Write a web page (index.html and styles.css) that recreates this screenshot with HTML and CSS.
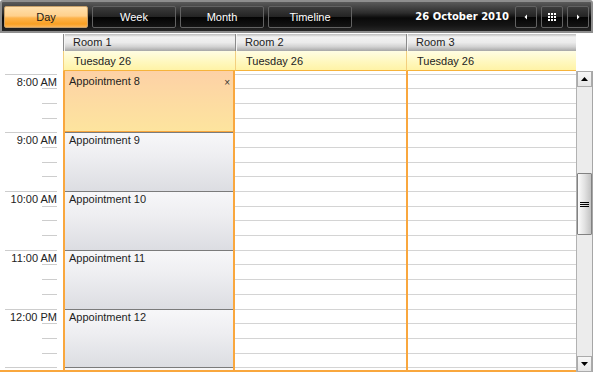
FILE: index.html
```html
<!DOCTYPE html>
<html>
<head>
<meta charset="utf-8">
<link rel="stylesheet" href="styles.css">
</head>
<body>
<div class="toolbar">
  <div class="btn active">Day</div>
  <div class="btn">Week</div>
  <div class="btn">Month</div>
  <div class="btn">Timeline</div>
  <div class="date">26 October 2010</div>
  <div class="nav"><svg width="8" height="8" viewBox="0 0 8 8"><polygon points="5,1.5 5,6.5 2.5,4" fill="#fff"/></svg></div>
  <div class="nav"><svg width="8" height="8" viewBox="0 0 8 8"><g fill="#fff"><rect x="0" y="0" width="2" height="2"/><rect x="3" y="0" width="2" height="2"/><rect x="6" y="0" width="2" height="2"/><rect x="0" y="3" width="2" height="2"/><rect x="3" y="3" width="2" height="2"/><rect x="6" y="3" width="2" height="2"/><rect x="0" y="6" width="2" height="2"/><rect x="3" y="6" width="2" height="2"/><rect x="6" y="6" width="2" height="2"/></g></svg></div>
  <div class="nav"><svg width="8" height="8" viewBox="0 0 8 8"><polygon points="3,1.5 3,6.5 5.5,4" fill="#fff"/></svg></div>
</div>
<div class="sched">
  <div class="corner"></div>
  <div class="room">Room 1</div>
  <div class="room">Room 2</div>
  <div class="room">Room 3</div>
  <div class="blank"></div>
  <div class="day">Tuesday 26</div>
  <div class="day">Tuesday 26</div>
  <div class="day">Tuesday 26</div>
  <div class="times">
    <div class="hour"><div class="tick major">8:00 AM</div><div class="tick"></div><div class="tick"></div><div class="tick"></div></div>
    <div class="hour"><div class="tick major">9:00 AM</div><div class="tick"></div><div class="tick"></div><div class="tick"></div></div>
    <div class="hour"><div class="tick major">10:00 AM</div><div class="tick"></div><div class="tick"></div><div class="tick"></div></div>
    <div class="hour"><div class="tick major">11:00 AM</div><div class="tick"></div><div class="tick"></div><div class="tick"></div></div>
    <div class="hour"><div class="tick major">12:00 PM</div><div class="tick"></div><div class="tick"></div><div class="tick"></div></div>
    <div class="hour"><div class="tick major">1:00 PM</div><div class="tick"></div><div class="tick"></div><div class="tick"></div></div>
  </div>
  <div class="col col1">
    <div class="appt sel"><span>Appointment 8</span><span class="close">×</span></div>
    <div class="appt">Appointment 9</div>
    <div class="appt">Appointment 10</div>
    <div class="appt">Appointment 11</div>
    <div class="appt">Appointment 12</div>
    <div class="appt">Appointment 13</div>
  </div>
  <div class="col col2 lined">
    <div class="slot"></div><div class="slot"></div><div class="slot"></div><div class="slot"></div><div class="slot"></div><div class="slot"></div><div class="slot"></div>
    <div class="slot"></div><div class="slot"></div><div class="slot"></div><div class="slot"></div><div class="slot"></div><div class="slot"></div><div class="slot"></div>
    <div class="slot"></div><div class="slot"></div><div class="slot"></div><div class="slot"></div><div class="slot"></div><div class="slot"></div><div class="slot"></div>
  </div>
  <div class="col col3 lined">
    <div class="slot"></div><div class="slot"></div><div class="slot"></div><div class="slot"></div><div class="slot"></div><div class="slot"></div><div class="slot"></div>
    <div class="slot"></div><div class="slot"></div><div class="slot"></div><div class="slot"></div><div class="slot"></div><div class="slot"></div><div class="slot"></div>
    <div class="slot"></div><div class="slot"></div><div class="slot"></div><div class="slot"></div><div class="slot"></div><div class="slot"></div><div class="slot"></div>
  </div>
  <div class="scroll">
    <div class="sb-btn"><svg width="7" height="4" viewBox="0 0 7 4"><polygon points="0,4 7,4 3.5,0" fill="#000"/></svg></div>
    <div class="track"><div class="thumb"><svg width="9" height="5" viewBox="0 0 9 5"><g fill="#000"><rect x="0" y="0" width="9" height="1"/><rect x="0" y="2" width="9" height="1"/><rect x="0" y="4" width="9" height="1"/></g></svg></div></div>
    <div class="sb-btn"><svg width="7" height="4" viewBox="0 0 7 4"><polygon points="0,0 7,0 3.5,4" fill="#000"/></svg></div>
  </div>
</div>
</body>
</html>
```
FILE: styles.css
```css
* { box-sizing: border-box; margin: 0; padding: 0; }
html, body { background: #fff; }
body {
  width: 593px;
  height: 374px;
  overflow: hidden;
  font-family: "Liberation Sans", Arial, sans-serif;
  font-size: 11px;
  color: #1e1e1e;
}

/* toolbar */
.toolbar {
  height: 33px;
  border: 2px solid #8e8e8e;
  border-radius: 3px 3px 0 0;
  background: linear-gradient(#5a5a5a 0%, #2c2c2c 38%, #0a0a0a 55%, #141414 80%, #262626 100%);
  display: flex;
  align-items: flex-start;
  padding: 4px 2px 0 2px;
  gap: 4px;
}
.btn, .nav {
  height: 22px;
  border: 1px solid #626262;
  border-radius: 2px;
  background: linear-gradient(#3c3c3c, #242424 48%, #040404 52%, #141414);
  color: #fff;
  display: flex;
  align-items: center;
  justify-content: center;
  flex: none;
}
.btn { width: 84px; }
.nav { width: 22px; }
.btn.active {
  background: linear-gradient(#ffe0ad, #ffd08c 45%, #fdb34c 55%, #f8a024 85%, #fbb456);
  border-color: #c7a06a;
  color: #1a1a1a;
}
.date {
  margin-left: auto;
  margin-right: 2px;
  color: #fff;
  font-family: "DejaVu Sans", sans-serif;
  font-weight: bold;
  font-size: 10px;
  line-height: 22px;
}

/* scheduler */
.sched {
  margin-top: 1px;
  display: grid;
  grid-template-columns: 63px 172px 171px 170px 17px;
  grid-template-rows: 17px 20px 301px;
}
.corner { grid-row: 1 / 3; grid-column: 1; }
.blank { grid-row: 1 / 3; grid-column: 5; }
.room {
  border-left: 1px solid #8a8a8a;
  box-shadow: inset 1px 0 #f4f4f4;
  background: linear-gradient(#bdbdbd 0%, #f2f2f2 18%, #ebebeb 50%, #d2d2d2 75%, #a6a6a6 100%);
  padding-left: 9px;
  line-height: 17px;
  color: #222;
}
.day {
  border-left: 1px solid #f3cf7e;
  border-bottom: 1px solid #f6b33b;
  background: linear-gradient(#fffde4, #fff8c0 55%, #fff3a6);
  padding: 1px 0 0 10px;
  line-height: 18px;
  color: #222;
}

.times, .col {
  border-bottom: 2px solid #f9a73e;
  overflow: hidden;
  display: flex;
  flex-direction: column;
}
.times { padding-top: 2.5px; }
.hour {
  flex: none;
  height: 58.75px;
  display: flex;
  flex-direction: column;
}
.tick {
  flex: none;
  height: 14.6875px;
  border-top: 1px solid #cdcdcd;
  margin: 0 6px 0 42px;
}
.tick.major {
  margin-left: 5px;
  text-align: right;
  padding-top: 1px;
  line-height: 13px;
  color: #222;
}

.col1 {
  border-left: 2px solid #f9a73e;
  border-right: 2px solid #f9a73e;
}
.col3 { border-left: 2px solid #f9a73e; }
.lined { padding-top: 2.5px; }
.slot {
  flex: none;
  height: 14.6875px;
  border-top: 1px solid #d4d4d4;
}

.appt {
  flex: none;
  height: 58.75px;
  border-top: 1px solid #7b7b7b;
  background: linear-gradient(#f7f7f9, #eeeef1 40%, #dcdde2);
  padding: 1px 0 0 4px;
  line-height: 13px;
  color: #1e1e1e;
}
.appt.sel {
  height: 61.25px;
  border-top: none;
  border-bottom: 1px solid #f9a73e;
  background: linear-gradient(#fdd1a6, #fddba2 50%, #fde49e);
  padding: 4px 3px 0 4px;
  display: flex;
  justify-content: space-between;
  align-items: flex-start;
}
.close { font-size: 10px; line-height: 16px; color: #333; }

/* scrollbar */
.scroll {
  display: flex;
  flex-direction: column;
  background: #ececec;
  border-left: 1px solid #b2b2b2;
  border-right: 1px solid #a6a6a6;
}
.sb-btn {
  flex: none;
  height: 16px;
  border: 1px solid #ababab;
  background: linear-gradient(#f7f7f7, #e6e6e6);
  display: flex;
  align-items: center;
  justify-content: center;
}
.track { flex: 1; }
.thumb {
  margin-top: 86px;
  height: 62px;
  border: 1px solid #828282;
  border-radius: 1px;
  background: linear-gradient(to right, #fbfbfb, #e2e2e2 50%, #c3c3c3);
  display: flex;
  align-items: center;
  justify-content: center;
}
```
